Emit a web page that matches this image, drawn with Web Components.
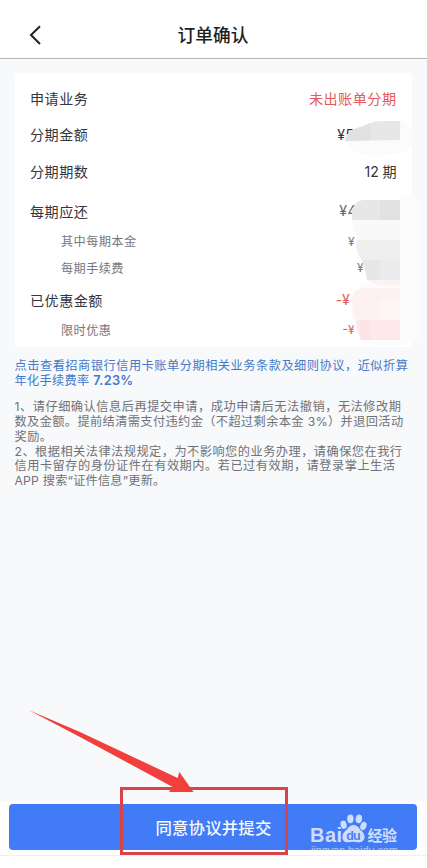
<!DOCTYPE html>
<html lang="zh-CN">
<head>
<meta charset="utf-8">
<title>订单确认</title>
<style>
body{margin:0;font-family:Inter,"Noto Sans CJK SC",sans-serif;background:#f7f9fb;}
</style>
</head>
<body>
<order-page></order-page>
<script>
class BaseElement extends HTMLElement{
  constructor(){super();this.attachShadow({mode:"open"});}
  connectedCallback(){this.shadowRoot.innerHTML=this.view();this.ready();}
  view(){return "";}
  ready(){}
}

/* One line of text spread evenly to a given advance width */
customElements.define("text-line",class extends BaseElement{
  view(){return `<style>:host{display:block;white-space:nowrap}b{font-weight:600}span{display:inline-block}</style><span>${this.getAttribute("text")}</span>`;}
  ready(){
    const s=this.shadowRoot.querySelector("span"),w=+this.getAttribute("width");
    if(w){s.style.letterSpacing=(w-s.getBoundingClientRect().width)/[...s.textContent].length+"px";}
  }
});

customElements.define("nav-header",class extends BaseElement{
  view(){return `<style>
:host{display:grid;grid-template-columns:1fr auto 1fr;align-items:center;height:59px;padding-top:11px;box-sizing:border-box;background:#fff;border-bottom:1px solid #b3b4b7;color:#1d1e22;font-size:17.7px;font-weight:500}
svg{width:14px;height:22px;margin-left:28px;margin-top:1px}
slot{display:block;margin:-2px 0 0 -1px}
</style>
<svg viewBox="0 0 14 22" fill="none" stroke="#202125" stroke-width="2"><path d="M12 2.2 L3 11 L12 20"/></svg><slot></slot><i></i>`;}
});

customElements.define("order-row",class extends BaseElement{
  view(){return `<style>
:host{display:flex;justify-content:space-between;align-items:center;padding:0 15.5px 0 15px;box-sizing:border-box;height:var(--h,36px);color:#34353d;font-size:14.1px;letter-spacing:.5px;white-space:nowrap}
:host([sub]){padding-left:46px;color:#77787e;font-size:12.2px;letter-spacing:.4px}
.v{margin-right:var(--end,0);display:block}
:host([sub]) .v{font-size:12px}
:host([red]) .v{color:#e45a5c}
</style><slot></slot><span class="v"><slot name="value"></slot></span>`;}
});

customElements.define("order-card",class extends BaseElement{
  view(){return `<style>
:host{display:block;position:relative;margin:14px 15px 0;height:274px;padding-top:7px;box-sizing:border-box;background:#fff;border-radius:4px}
svg{position:absolute;left:275px;top:0;width:137px;height:274px;overflow:visible;pointer-events:none}
</style><slot></slot>
<svg viewBox="290 73 137 274">
<path d="M346 138C352 123 375 121 400 121Q413 124 413 140Q411 152 398 153Q366 160 350 148Z" fill="#fbfbfc"/>
<path d="M345 141Q347 129 362 127Q371 121 381 121H400V140Z" fill="#e7e7e9"/>
<path d="M345 141Q347 129 362 127L370 123V140Z" fill="#e1e1e3"/>
<path d="M400 193Q420 193 420 211V334Q416 344 402 345H375Q362 343 358 334Q349 322 350 300Q352 290 361 286Q370 281 400 281Z" fill="#fdfcfd"/>
<path d="M352 220H400V240H359Q353 230 352 220Z" fill="#f9f9fa"/>
<path d="M352 220Q350 200 365 200H400V220Z" fill="#e7e7e9"/>
<path d="M380 200H400V220H380Z" fill="#e1e1e3"/>
<path d="M357 240H400V260H362Q354 250 357 240Z" fill="#efeff0"/>
<path d="M362 260H400V280H367Q365 268 362 260Z" fill="#e7e7e9"/>
<path d="M380 260H400V280H380Z" fill="#ebebed"/>
<path d="M366 280H400V285Q380 288 366 280Z" fill="#fdf1f2"/>
<path d="M356 320Q345 292 362 288H400V320Z" fill="#fdf1f2"/>
<path d="M380 300H400V320H380Z" fill="#fdf5f6"/>
<path d="M356 320H400V340H361Q356 331 356 320Z" fill="#fde9eb"/>
<path d="M360 320H370V340H361Z" fill="#fce3e5"/>
</svg>`;}
});

customElements.define("legal-text",class extends BaseElement{
  view(){return `<style>
:host{display:block;padding:11px 0 0 14.5px;color:#717277;font-size:12.2px;line-height:14.85px}
text-line{height:14.85px}
.link{color:#4379ca;margin-bottom:12px;line-height:15px}
.link text-line{height:15px}
</style>
<div class="link">
<text-line width="394" text="点击查看招商银行信用卡账单分期相关业务条款及细则协议，近似折算"></text-line>
<text-line width="119" text="年化手续费率 &lt;b style='font-size:12.8px'&gt;7.23%&lt;/b&gt;"></text-line>
</div>
<text-line width="387" text="1、请仔细确认信息后再提交申请，成功申请后无法撤销，无法修改期"></text-line>
<text-line width="389" text="数及金额。提前结清需支付违约金（不超过剩余本金 3%）并退回活动"></text-line>
<text-line width="38" text="奖励。"></text-line>
<text-line width="388" text="2、根据相关法律法规规定，为不影响您的业务办理，请确保您在我行"></text-line>
<text-line width="381" text="信用卡留存的身份证件在有效期内。若已过有效期，请登录掌上生活"></text-line>
<text-line width="151" text="APP 搜索“证件信息”更新。"></text-line>`;}
});

customElements.define("site-mark",class extends BaseElement{
  view(){return `<style>
:host{position:absolute;left:300px;top:3px;width:118px;height:58px;pointer-events:none}
svg{display:block;overflow:hidden}
text{fill:#cfddfd}
</style>
<svg width="118" height="58" viewBox="300 804 118 58">
<text x="310" y="841.6" font-family="Liberation Sans" font-weight="700" font-size="20" textLength="32">Bai</text>
<g fill="#cfddfd">
<ellipse cx="343.6" cy="824.8" rx="3" ry="4.2" transform="rotate(-15 343.6 824.8)"/>
<ellipse cx="350.4" cy="818.8" rx="3.2" ry="4.4"/>
<ellipse cx="358.8" cy="818.8" rx="3.2" ry="4.4" transform="rotate(8 359 819)"/>
<ellipse cx="363.4" cy="826" rx="3" ry="4.2" transform="rotate(20 363.4 826)"/>
<path d="M353.5 825Q357.5 825 360 829.5Q365 833.5 364.5 838Q363 843 358 842.3Q353 841 348 842.3Q342.5 842.5 342.3 837Q342.5 832.5 347 829.5Q349.5 825 353.5 825Z"/>
</g>
<text x="346.2" y="840" font-family="Liberation Sans" font-weight="700" font-size="12.5" textLength="14.5" style="fill:#4b7ff5">du</text>
<text x="367.5" y="841" font-family="Noto Sans CJK SC" font-weight="700" font-size="15" textLength="29.5">经验</text>
<text x="311" y="854" font-family="Liberation Sans" font-size="11" textLength="87" lengthAdjust="spacing" style="fill:#b0c8fc">jingyan.baidu.com</text>
<path d="M300 850H418V855H300Z" fill="#fdfefd"/><path d="M300 855H418V856H300Z" fill="#eff2ec"/><path d="M300 856H418V862H300Z" fill="#fdfefd"/>
</svg>`;}
});

customElements.define("submit-bar",class extends BaseElement{
  view(){return `<style>
:host{display:block;position:relative;height:67px;box-sizing:border-box;background:#fdfefd;padding:3px 10px 0 9px;margin-top:auto}
button{display:block;width:100%;height:46px;border:0;border-radius:4px;background:#427bf6;color:#f5f8ff;font:500 16.4px "Noto Sans CJK SC",sans-serif;letter-spacing:.2px;padding:0 0 0 1px;line-height:46px}
.rule{height:1px;background:#eff2ec;margin:5px -10px 0 -9px}
</style><button><slot></slot></button><div class="rule"></div><site-mark></site-mark>`;}
});

customElements.define("callout-arrow",class extends BaseElement{
  view(){return `<style>:host{position:absolute;left:0;top:700px;width:427px;height:168px;pointer-events:none}svg{display:block}</style>
<svg width="427" height="168" viewBox="0 700 427 168">
<rect x="121.5" y="788.5" width="165" height="65" fill="none" stroke="#d9434a" stroke-width="3"/>
<path d="M28.5 710L80 732L177.7 778L179.3 772L193.5 792L169 792L172.7 787L80 737Z" fill="#f13f3d"/>
</svg>`;}
});

customElements.define("order-page",class extends BaseElement{
  view(){return `<style>
:host{display:flex;flex-direction:column;position:relative;width:427px;height:868px;overflow:hidden;background:#f7f9fb}
</style>
<nav-header>订单确认</nav-header>
<order-card>
<order-row red style="--h:36px">申请业务<span slot="value">未出账单分期</span></order-row>
<order-row style="--h:36.5px;--end:42px">分期金额<span slot="value">¥5</span></order-row>
<order-row style="--h:36.5px">分期期数<span slot="value" style="letter-spacing:-.1px">12 期</span></order-row>
<order-row style="--h:43px;--end:39.5px">每期应还<span slot="value" style="color:#65666c">¥4</span></order-row>
<order-row sub style="--h:18px;--end:41.5px">其中每期本金<span slot="value">¥</span></order-row>
<order-row sub style="--h:35px;--end:32.5px">每期手续费<span slot="value">¥</span></order-row>
<order-row red style="--h:29px;--end:47px">已优惠金额<span slot="value" style="letter-spacing:-.2px">-¥</span></order-row>
<order-row sub red style="--h:31px;--end:42px">限时优惠<span slot="value" style="letter-spacing:0">-¥</span></order-row>
</order-card>
<legal-text></legal-text>
<submit-bar>同意协议并提交</submit-bar>
<callout-arrow></callout-arrow>`;}
});
</script>
</body>
</html>
